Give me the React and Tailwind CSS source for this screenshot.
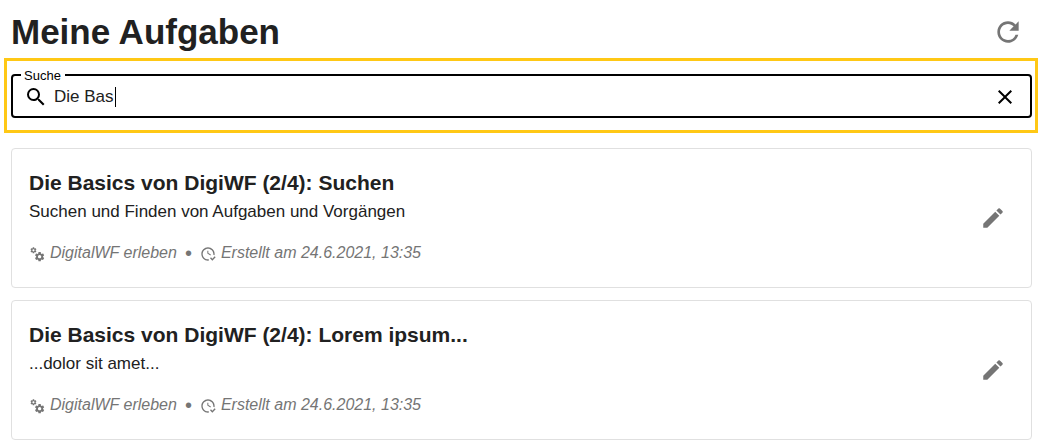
import { useState } from "react";
import { MdClose, MdEdit, MdRefresh, MdSearch } from "react-icons/md";

const COGS =
  "M15.9,18.45C17.25,18.45 18.35,17.35 18.35,16C18.35,14.65 17.25,13.55 15.9,13.55C14.54,13.55 13.45,14.65 13.45,16C13.45,17.35 14.54,18.45 15.9,18.45M21.1,16.68L22.58,17.84C22.71,17.95 22.75,18.13 22.66,18.29L21.26,20.71C21.17,20.86 21,20.92 20.83,20.86L19.09,20.16C18.73,20.44 18.33,20.67 17.91,20.85L17.64,22.7C17.62,22.87 17.47,23 17.3,23H14.5C14.32,23 14.18,22.87 14.15,22.7L13.89,20.85C13.46,20.67 13.07,20.44 12.71,20.16L10.96,20.86C10.81,20.92 10.62,20.86 10.54,20.71L9.14,18.29C9.05,18.13 9.09,17.95 9.22,17.84L10.7,16.68L10.65,16L10.7,15.31L9.22,14.16C9.09,14.05 9.05,13.86 9.14,13.71L10.54,11.29C10.62,11.13 10.81,11.07 10.96,11.13L12.71,11.84C13.07,11.56 13.46,11.32 13.89,11.15L14.15,9.29C14.18,9.13 14.32,9 14.5,9H17.3C17.47,9 17.62,9.13 17.64,9.29L17.91,11.15C18.33,11.32 18.73,11.56 19.09,11.84L20.83,11.13C21,11.07 21.17,11.13 21.26,11.29L22.66,13.71C22.75,13.86 22.71,14.05 22.58,14.16L21.1,15.31L21.15,16L21.1,16.68M6.69,8.07C7.56,8.07 8.26,7.37 8.26,6.5C8.26,5.63 7.56,4.92 6.69,4.92A1.58,1.58 0 0,0 5.11,6.5C5.11,7.37 5.82,8.07 6.69,8.07M10.03,6.94L11,7.68C11.07,7.75 11.09,7.87 11.03,7.97L10.13,9.53C10.08,9.63 9.96,9.67 9.86,9.63L8.74,9.18L8,9.62L7.81,10.81C7.79,10.92 7.7,11 7.59,11H5.79C5.67,11 5.58,10.92 5.56,10.81L5.4,9.62L4.64,9.18L3.52,9.63C3.41,9.67 3.3,9.63 3.24,9.53L2.34,7.97C2.28,7.87 2.31,7.75 2.39,7.68L3.34,6.94L3.31,6.5L3.34,6.06L2.39,5.32C2.31,5.25 2.28,5.13 2.34,5.03L3.24,3.47C3.3,3.37 3.41,3.33 3.52,3.37L4.63,3.82L5.4,3.38L5.56,2.19C5.58,2.08 5.67,2 5.79,2H7.59C7.7,2 7.79,2.08 7.81,2.19L8,3.38L8.74,3.82L9.86,3.37C9.96,3.33 10.08,3.37 10.13,3.47L11.03,5.03C11.09,5.13 11.07,5.25 11,5.32L10.03,6.06L10.06,6.5L10.03,6.94Z";

const CLOCK_CHECK =
  "M23.5 17L18.5 22L15 18.5L16.5 17L18.5 19L22 15.5L23.5 17M13.1 19.9C12.7 20 12.4 20 12 20C7.6 20 4 16.4 4 12S7.6 4 12 4 20 7.6 20 12C20 12.4 20 12.7 19.9 13.1C20.6 13.2 21.2 13.4 21.8 13.7C21.9 13.1 22 12.6 22 12C22 6.5 17.5 2 12 2S2 6.5 2 12C2 17.5 6.5 22 12 22C12.6 22 13.2 21.9 13.7 21.8C13.4 21.3 13.2 20.6 13.1 19.9M15.6 14.1L11 11.3V7H12.5V10.5L16.4 12.8C16.1 13.2 15.8 13.6 15.6 14.1Z";

const tasks = [
  {
    id: 1,
    title: "Die Basics von DigiWF (2/4): Suchen",
    description: "Suchen und Finden von Aufgaben und Vorgängen",
    process: "DigitalWF erleben",
    created: "Erstellt am 24.6.2021, 13:35",
  },
  {
    id: 2,
    title: "Die Basics von DigiWF (2/4): Lorem ipsum...",
    description: "...dolor sit amet...",
    process: "DigitalWF erleben",
    created: "Erstellt am 24.6.2021, 13:35",
  },
];

function MetaIcon({ path }) {
  return (
    <svg viewBox="0 0 24 24" className="mt-0.5 size-4 shrink-0 fill-current" aria-hidden="true">
      <path d={path} />
    </svg>
  );
}

function SearchField() {
  const [query, setQuery] = useState("Die Bas");
  return (
    <div className="border-3 border-[#ffc815] pt-[13px] pr-[3px] pb-3 pl-1">
      <div className="relative flex h-11 items-center rounded border-2 border-black pt-0.5 pr-[13px] pl-[11px]">
        <label htmlFor="search" className="absolute -top-2 left-2 bg-white pr-1 pl-[3px] text-[13px] leading-4 text-black">
          Suche
        </label>
        <MdSearch className="size-6 shrink-0 text-black" aria-hidden="true" />
        <div className="relative ml-1.5 flex flex-1">
          <input
            id="search"
            type="text"
            value={query}
            onChange={(e) => setQuery(e.target.value)}
            className="w-full bg-transparent text-[17px] leading-6 text-[#212121] outline-none"
          />
          {query === "Die Bas" && <span className="absolute top-0.5 left-[61px] h-5 w-px bg-black" />}
        </div>
        <button type="button" aria-label="Suche leeren" onClick={() => setQuery("")} className="shrink-0 text-black">
          <MdClose className="size-6" />
        </button>
      </div>
    </div>
  );
}

function TaskCard({ task }) {
  return (
    <li className="flex items-center justify-between rounded border border-[#e0e0e0] py-5 pr-[25px] pl-[17px]">
      <div>
        <h2 className="text-[21px] leading-7 font-bold text-[#212121]">{task.title}</h2>
        <p className="text-[17px] leading-[30px] text-[#212121]">{task.description}</p>
        <div className="mt-3 flex h-7 items-center text-base leading-7 text-[#757575] italic">
          <MetaIcon path={COGS} />
          <span className="ml-[5px]">{task.process}</span>
          <span className="mx-2 text-xl leading-7 not-italic">•</span>
          <MetaIcon path={CLOCK_CHECK} />
          <span className="ml-[5px]">{task.created}</span>
        </div>
      </div>
      <button type="button" aria-label="Aufgabe bearbeiten" className="shrink-0 text-[#757575]">
        <MdEdit className="size-[26px]" />
      </button>
    </li>
  );
}

export default function App() {
  return (
    <main className="bg-white font-['Liberation_Sans',Arial,sans-serif]">
      <header className="flex h-[58px] items-center justify-between pt-1.5 pr-[15px] pl-[11px]">
        <h1 className="text-[35px] leading-[52px] font-bold text-[#212121]">Meine Aufgaben</h1>
        <button type="button" aria-label="Aktualisieren" className="text-[#757575]">
          <MdRefresh className="size-8" />
        </button>
      </header>
      <div className="mr-px ml-1">
        <SearchField />
      </div>
      <ul className="mt-[15px] mr-[7px] ml-[11px] flex flex-col gap-3 pb-1.5">
        {tasks.map((task) => (
          <TaskCard key={task.id} task={task} />
        ))}
      </ul>
    </main>
  );
}
